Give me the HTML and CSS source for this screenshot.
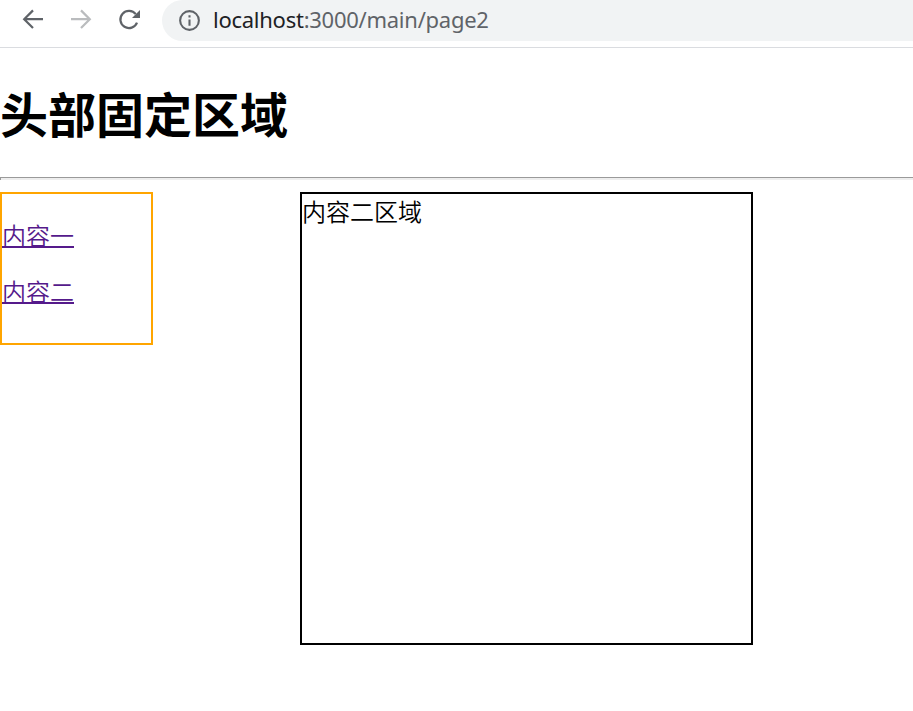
FILE: index.html
```html
<!DOCTYPE html>
<html lang="zh-CN">
<head>
<meta charset="utf-8">
<title>page2</title>
<link rel="stylesheet" href="styles.css">
</head>
<body>
<div class="toolbar">
  <svg class="icon" viewBox="0 0 28 28"><path d="M24 14.2H5.5M14 5.4L5.2 14.2L14 23"/></svg>
  <svg class="icon disabled" viewBox="0 0 28 28"><path d="M4 14.2H22.5M14 5.4L22.8 14.2L14 23"/></svg>
  <svg class="icon" viewBox="0 0 28 28"><path d="M22 17.6A8.6 8.6 0 1 1 20.8 9.2"/><path class="head" d="M25 5v8h-8z"/></svg>
  <div class="address">
    <svg class="info" viewBox="0 0 24 24"><path d="M11 7h2v2h-2zm0 4h2v6h-2zm1-9a10 10 0 1 0 0 20 10 10 0 0 0 0-20zm0 18a8 8 0 1 1 0-16 8 8 0 0 1 0 16z"/></svg>
    <span class="url"><span class="host">localhost</span>:3000/main/page2</span>
  </div>
</div>
<h1 class="title">头部固定区域</h1>
<hr class="rule">
<div class="main">
  <nav class="menu">
    <a class="link" href="#">内容一</a>
    <a class="link" href="#">内容二</a>
  </nav>
  <section class="content">内容二区域</section>
</div>
</body>
</html>
```

FILE: styles.css
```css
body {
  margin: 0;
  height: 711px;
  overflow: hidden;
  background: #fff;
  color: #000;
  font: 350 24px/32px "Noto Sans CJK SC", sans-serif;
}
.toolbar {
  box-sizing: border-box;
  display: flex;
  height: 48px;
  padding-left: 19px;
  border-bottom: 1px solid #dadce0;
}
.icon {
  width: 28px;
  height: 28px;
  margin: 5px 20px 0 0;
  fill: none;
  stroke: #5f6368;
  stroke-width: 2.2;
}
.head {
  fill: #5f6368;
  stroke: none;
}
.disabled { stroke: #babcbe; }
.address {
  display: flex;
  flex: 1;
  height: 41px;
  margin-left: -1px;
  padding-left: 15px;
  border-radius: 21px 0 0 21px;
  background: #f1f3f4;
}
.info {
  width: 25px;
  height: 25px;
  margin: 8px 11px 0 0;
  fill: #5f6368;
}
.url {
  color: #5f6368;
  font: 400 22px/39px "Noto Sans", sans-serif;
  letter-spacing: -0.26px;
  white-space: nowrap;
}
.host { color: #202124; }
.title {
  margin: 32px 0;
  font-size: 48px;
  font-weight: 700;
  line-height: 65px;
}
.rule {
  box-sizing: border-box;
  height: 3px;
  margin: 0 0 12px;
  border: 0;
  border-top: 1px solid #9a9a9a;
  border-left: 1px solid #9a9a9a;
  background: #eee;
}
.main {
  display: flex;
  align-items: flex-start;
  gap: 147px;
}
.menu {
  box-sizing: border-box;
  display: flex;
  flex-direction: column;
  align-items: flex-start;
  gap: 24px;
  width: 153px;
  height: 153px;
  padding-top: 25px;
  border: 2px solid orange;
}
.link {
  color: #551a8b;
  text-decoration-thickness: 2px;
  text-underline-offset: 1px;
}
.content {
  box-sizing: border-box;
  width: 453px;
  height: 453px;
  padding-top: 1px;
  border: 2px solid #000;
}
```
